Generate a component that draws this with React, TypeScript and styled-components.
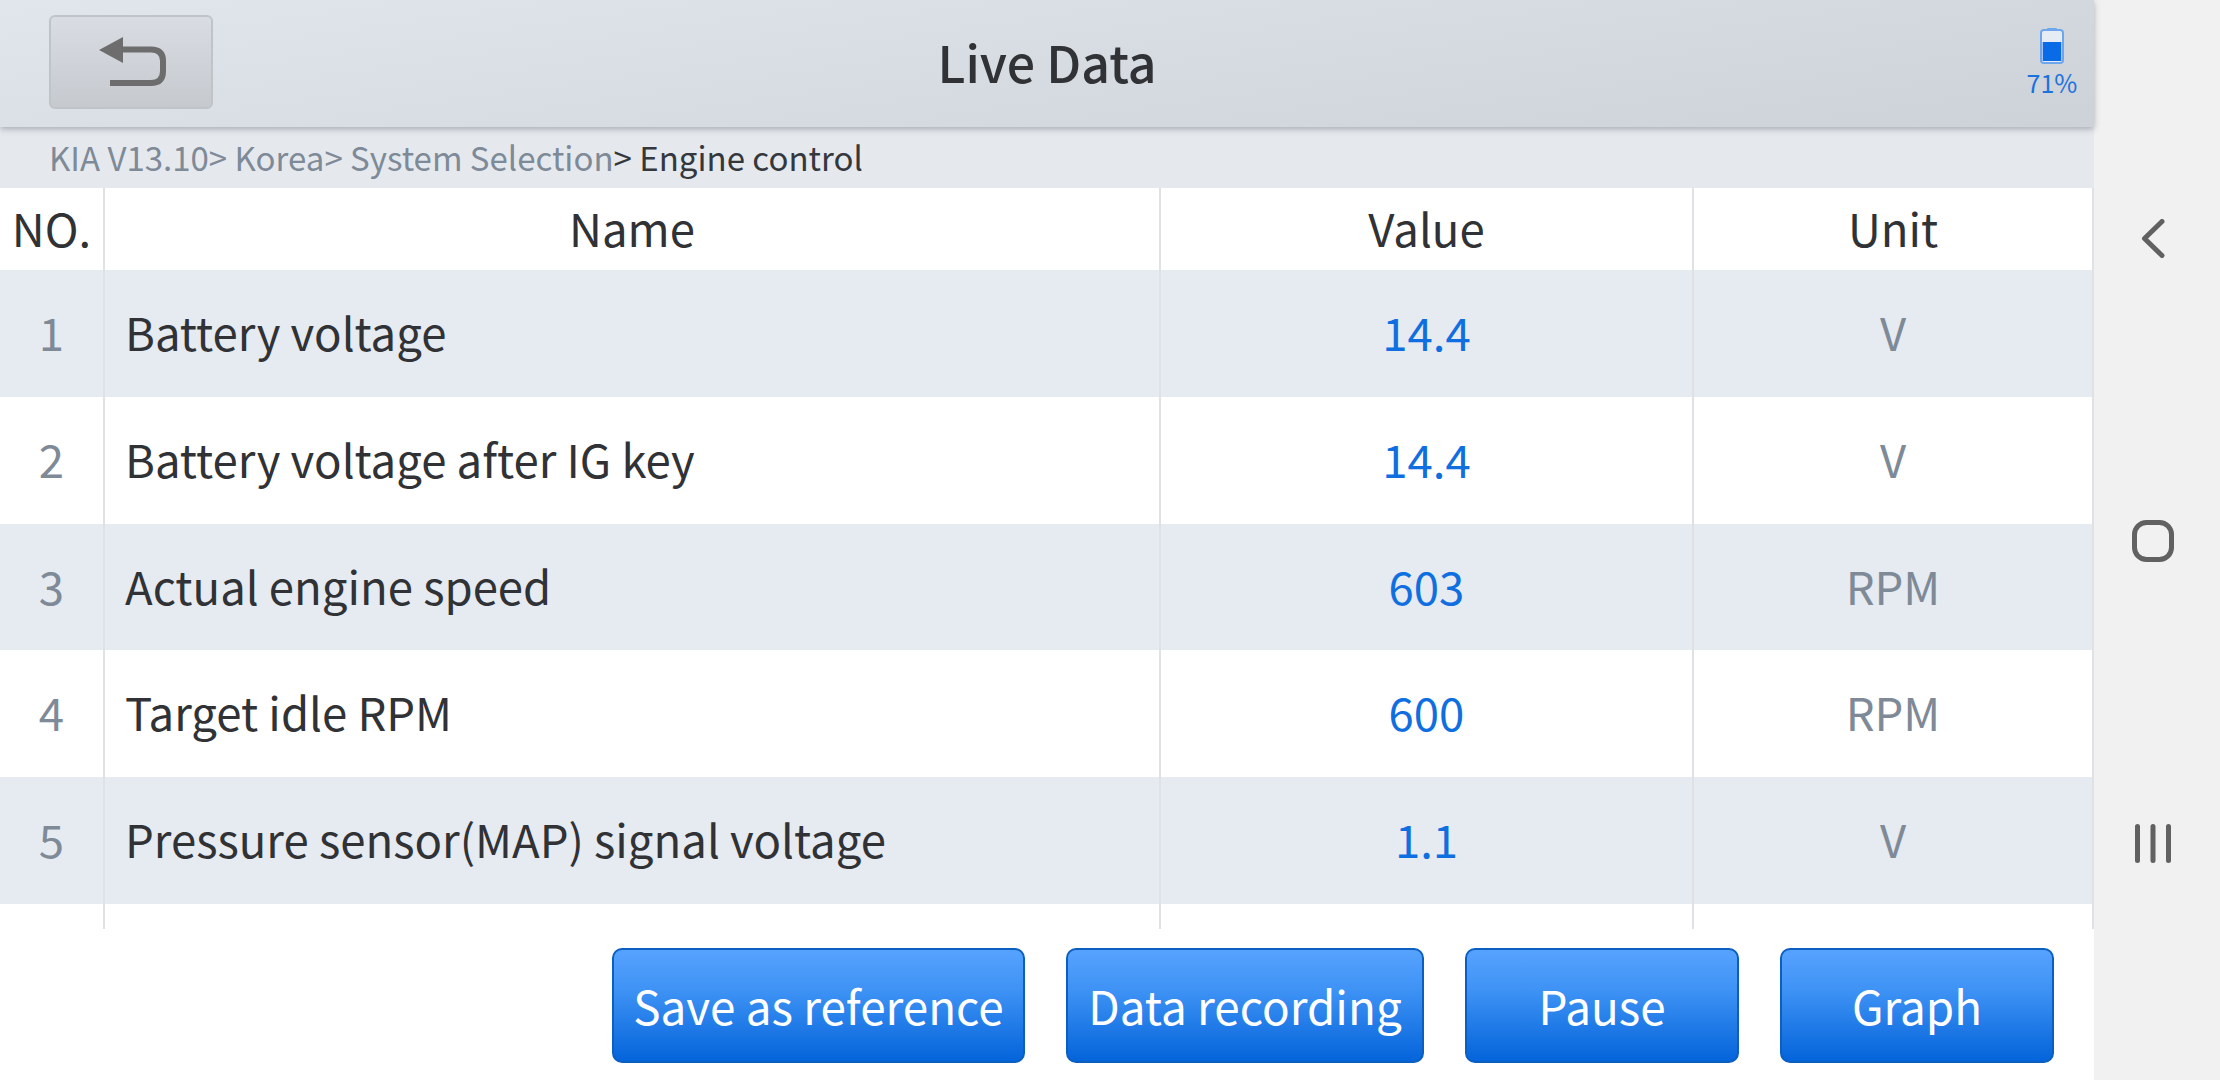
import React from "react";
import styled, { createGlobalStyle } from "styled-components";

const Global = createGlobalStyle`
  html, body { margin: 0; padding: 0; background: #f1f1f2; }
  body { font-family: "Noto Sans CJK KR", "Noto Sans", sans-serif; }
  #root { width: 2220px; height: 1080px; overflow: hidden; }
`;

const Screen = styled.div`
  display: flex;
  width: 2220px;
  height: 1080px;
`;
const Main = styled.main`
  width: 2094px;
  flex: none;
  display: flex;
  flex-direction: column;
  background: #fff;
`;
const Header = styled.header`
  position: relative;
  z-index: 1;
  height: 127px;
  flex: none;
  box-sizing: border-box;
  display: grid;
  grid-template-columns: 1fr auto 1fr;
  align-items: center;
  padding: 0 16px 3px;
  background: linear-gradient(172deg, #e1e6ec 0%, #cdd1d8 100%);
  box-shadow: 0 2px 6px rgba(90, 95, 105, 0.45);
`;
const BackButton = styled.button`
  width: 164px;
  height: 94px;
  margin-left: 33px;
  padding: 0 0 0 4px;
  box-sizing: border-box;
  border: 2px solid #bfc4c9;
  border-radius: 6px;
  background: linear-gradient(180deg, #d9dde3 0%, #c6cacf 100%);
  display: flex;
  align-items: center;
  justify-content: center;
`;
const Title = styled.h1`
  margin: 0 0 3px;
  font-size: 50px;
  font-weight: 500;
  line-height: 1;
  color: #303236;
`;
const Battery = styled.div`
  justify-self: end;
  width: 52px;
  display: flex;
  flex-direction: column;
  align-items: center;
  gap: 4px;
  color: #1a72de;
  font-size: 25px;
  line-height: 28px;
`;
const Crumbs = styled.div`
  height: 61px;
  flex: none;
  box-sizing: border-box;
  padding: 0 0 2px 49px;
  display: flex;
  align-items: center;
  background: #e5e9ee;
  font-size: 33px;
  color: #7e8a97;
  white-space: pre;
`;
const CrumbCurrent = styled.span`
  color: #34383d;
`;
const Row = styled.div<{ $h: number; $shade?: boolean }>`
  height: ${(p) => p.$h}px;
  flex: none;
  display: grid;
  grid-template-columns: 105px 1056px 533px 400px;
  background: ${(p) => (p.$shade ? "#e6eaf1" : "#fff")};
`;
const Cell = styled.div<{ $color?: string; $left?: boolean }>`
  display: flex;
  align-items: center;
  justify-content: ${(p) => (p.$left ? "flex-start" : "center")};
  box-sizing: border-box;
  padding-left: ${(p) => (p.$left ? "20px" : "0")};
  padding-bottom: 3px;
  border-right: 2px solid #e0e1e4;
  font-size: 45.5px;
  line-height: 1;
  color: ${(p) => p.$color ?? "#303236"};
  white-space: pre;
`;
const Footer = styled.footer`
  flex: 1;
  display: flex;
  justify-content: flex-end;
  gap: 41px;
  padding: 19px 40px 0 0;
`;
const ActionButton = styled.button<{ $w: number }>`
  width: ${(p) => p.$w}px;
  height: 115px;
  box-sizing: border-box;
  padding: 0;
  border: 2px solid #0a5fc0;
  border-radius: 10px;
  background: linear-gradient(180deg, #57a2ff 0%, #3f93f5 35%, #0464da 100%);
  color: #fff;
  font-family: inherit;
  font-size: 45.8px;
  line-height: 1;
`;
const NavBar = styled.nav`
  flex: 1;
  display: flex;
  flex-direction: column;
  align-items: center;
  padding: 219px 8px 0 0;
  background: #f1f1f2;
  box-sizing: border-box;
`;
const NavSlot = styled.div<{ $mt: number }>`
  margin-top: ${(p) => p.$mt}px;
  display: flex;
`;

const rows = [
  ["1", "Battery voltage", "14.4", "V"],
  ["2", "Battery voltage after IG key", "14.4", "V"],
  ["3", "Actual engine speed", "603", "RPM"],
  ["4", "Target idle RPM", "600", "RPM"],
  ["5", "Pressure sensor(MAP) signal voltage", "1.1", "V"],
];
const heights = [127, 127, 126, 127, 127];
const actions: [string, number][] = [
  ["Save as reference", 413],
  ["Data recording", 358],
  ["Pause", 274],
  ["Graph", 274],
];

export default function App() {
  return (
    <Screen>
      <Global />
      <Main>
        <Header>
          <BackButton aria-label="Back">
            <svg width="68" height="50" viewBox="0 0 68 50">
              <path d="M0 13 L24 0 V26 Z" fill="#6d6d6e" />
              <path d="M22 12.5 H52 Q64 12.5 64 24 V34 Q64 46 52 46 H11" fill="none" stroke="#6d6d6e" strokeWidth="6" />
            </svg>
          </BackButton>
          <Title>Live Data</Title>
          <Battery>
            <svg width="24" height="36" viewBox="0 0 24 36">
              <rect x="7" y="0" width="10" height="3" rx="1" fill="#6da6ec" />
              <rect x="1" y="2" width="22" height="33" rx="3" fill="#e6ecf4" stroke="#6da6ec" strokeWidth="2" />
              <rect x="2.7" y="14" width="18.6" height="19" fill="#0a6be6" />
            </svg>
            <span>71%</span>
          </Battery>
        </Header>
        <Crumbs>
          {"KIA V13.10> Korea> System Selection"}
          <CrumbCurrent>{"> Engine control"}</CrumbCurrent>
        </Crumbs>
        <Row $h={82}>
          <Cell>NO.</Cell>
          <Cell>Name</Cell>
          <Cell>Value</Cell>
          <Cell>Unit</Cell>
        </Row>
        {rows.map((r, i) => (
          <Row key={r[0]} $h={heights[i]} $shade={i % 2 === 0}>
            <Cell $color="#7e8a97">{r[0]}</Cell>
            <Cell $left>{r[1]}</Cell>
            <Cell $color="#0f6fe0">{r[2]}</Cell>
            <Cell $color="#7e8a97">{r[3]}</Cell>
          </Row>
        ))}
        <Row $h={25}>
          <Cell />
          <Cell />
          <Cell />
          <Cell />
        </Row>
        <Footer>
          {actions.map(([label, w]) => (
            <ActionButton key={label} $w={w}>
              {label}
            </ActionButton>
          ))}
        </Footer>
      </Main>
      <NavBar>
        <svg width="24" height="39" viewBox="0 0 24 39">
          <path d="M21 2.5 L3.5 19.5 L21 36.5" fill="none" stroke="#616161" strokeWidth="5" strokeLinecap="round" strokeLinejoin="round" />
        </svg>
        <NavSlot $mt={262}>
          <svg width="42" height="42" viewBox="0 0 42 42">
            <rect x="2.5" y="2.5" width="37" height="37" rx="12" fill="none" stroke="#616161" strokeWidth="5" />
          </svg>
        </NavSlot>
        <NavSlot $mt={262}>
          <svg width="36" height="39" viewBox="0 0 36 39">
            <path d="M2.5 2.5 V36.5 M18 2.5 V36.5 M33.5 2.5 V36.5" fill="none" stroke="#616161" strokeWidth="5" strokeLinecap="round" />
          </svg>
        </NavSlot>
      </NavBar>
    </Screen>
  );
}
